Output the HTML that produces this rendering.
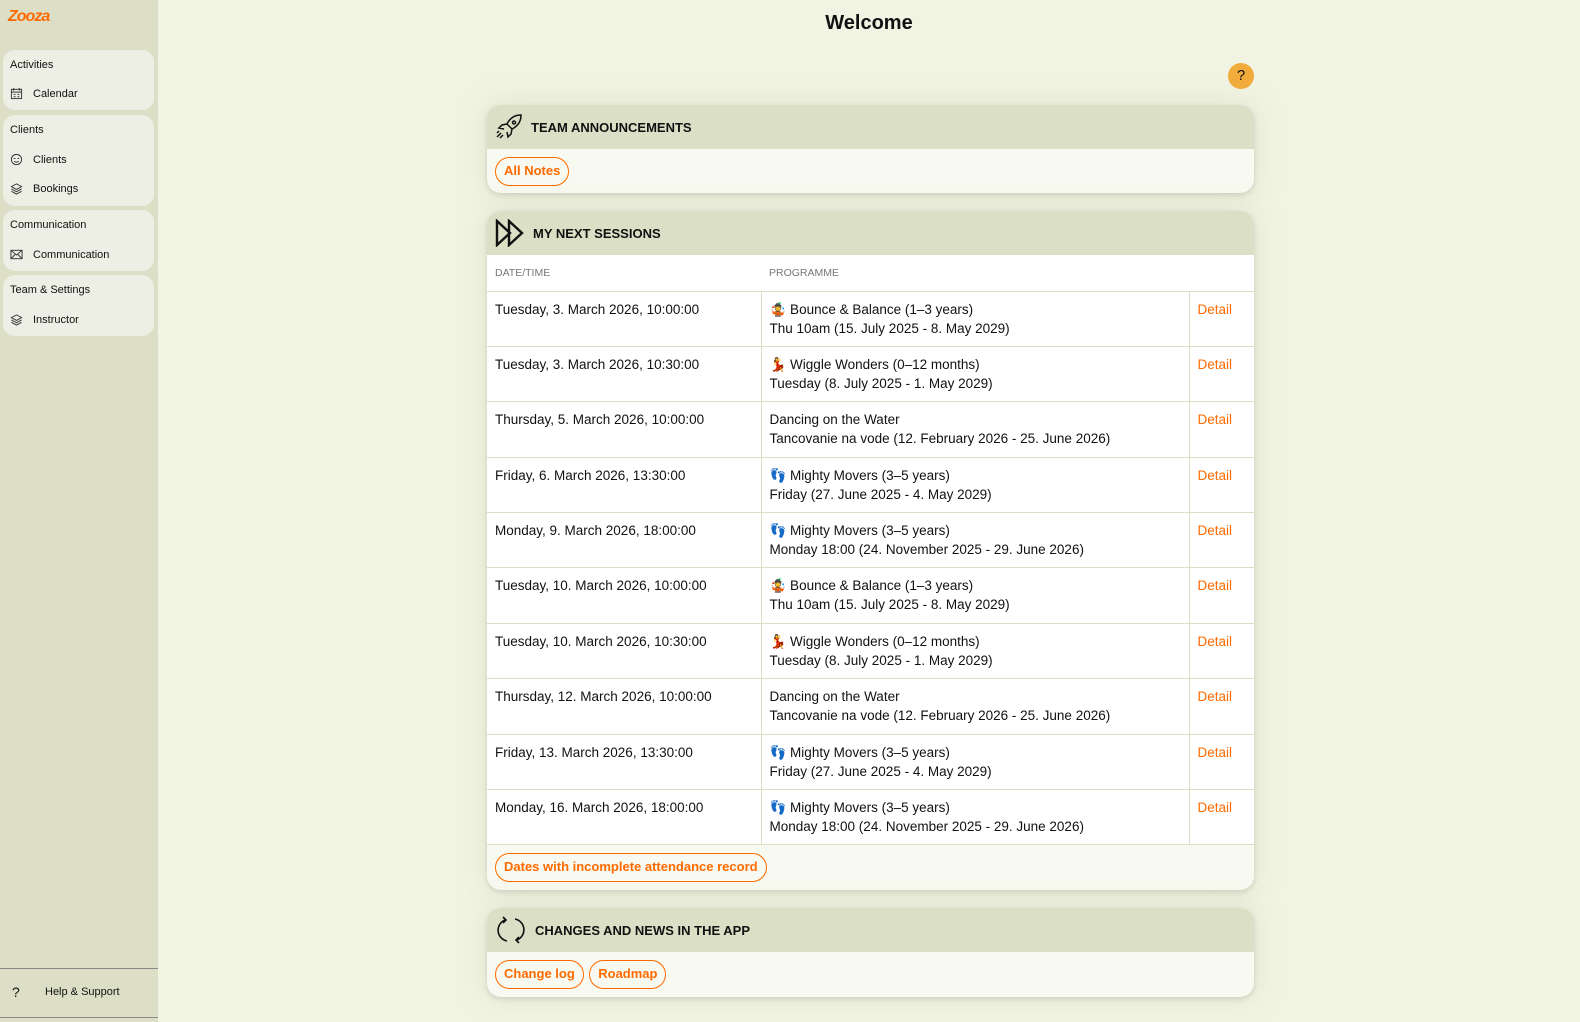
<!DOCTYPE html>
<html><head><meta charset="utf-8"><style>
*{box-sizing:border-box;margin:0;padding:0}
body{width:1580px;height:1022px;overflow:hidden;background:#f1f4e2;font-family:"Liberation Sans","Noto Sans CJK JP",sans-serif;color:#111;position:relative}
.side{position:absolute;left:0;top:0;width:158px;height:1022px;background:#dcdfc5}
.logo{position:absolute;left:8px;top:8px;color:#ff6a00;font-weight:bold;font-size:16px;font-style:italic;letter-spacing:-1px}
.grp{position:absolute;left:3px;width:151px;background:#edeee4;border-radius:12px}
.gt{position:absolute;left:7px;font-size:11px;color:#111}
.it{position:absolute;left:7px;font-size:11px;display:flex;align-items:center}
.it svg{width:13px;height:13px;margin-right:10px}
.help{position:absolute;left:0;top:968px;width:158px;height:50px;border-top:1px solid #888;border-bottom:1px solid #888;font-size:11px}
h1{position:absolute;left:158px;right:0;top:12px;text-align:center;font-size:20px;font-weight:bold}
.q{position:absolute;left:1228px;top:63px;width:26px;height:26px;border-radius:50%;background:#f2ac3c;text-align:center;line-height:26px;font-size:15px}
.card{position:absolute;left:487px;width:767px;background:#f8f9f0;border-radius:14px;box-shadow:0 2px 6px rgba(0,0,0,.12),0 0 30px rgba(180,185,150,.25);overflow:hidden}
.ch{height:44px;background:#dbdfc5;display:flex;align-items:center;padding-left:8px;font-weight:bold;font-size:13px}
.ch svg{margin-right:8px}
.btn{display:inline-block;border:1.5px solid #ff6a00;color:#ff6a00;border-radius:16px;font-weight:bold;font-size:13px;padding:0 8px;height:29px;line-height:26px;margin-right:1px}
table{border-collapse:collapse;width:767px;background:#fff;font-size:13.5px}
th{height:36px;text-align:left;font-weight:normal;color:#777;font-size:10.5px;padding-left:8px;border-bottom:1.5px solid #dcdfc5}
td{height:55.4px;vertical-align:top;padding:8px 8px 0;line-height:19px;border-bottom:1px solid #dcdfc5}
td+td{border-left:1px solid #dcdfc5}
td.d{color:#ff6a00}
</style></head><body>
<div class="side">
<div class="logo">Zooza</div>
<div class="grp" style="top:50px;height:60px"><div class="gt" style="top:9px">Activities</div>
<div class="it" style="top:37px"><svg viewBox="0 0 14 14" fill="none" stroke="#333"><rect x="1.5" y="2.5" width="11" height="10"/><path d="M1.5 5.5h11M4 1v3M10 1v3M4 8h2M8 8h2M4 10.5h2M8 10.5h2"/></svg>Calendar</div></div>
<div class="grp" style="top:115px;height:91px"><div class="gt" style="top:9px">Clients</div>
<div class="it" style="top:38px"><svg viewBox="0 0 14 14" fill="none" stroke="#333"><circle cx="7" cy="7" r="5.5"/><path d="M4 6h2M8 6h2M4.5 9c1.5 1 3.5 1 5 0"/></svg>Clients</div>
<div class="it" style="top:67px"><svg viewBox="0 0 14 14" fill="none" stroke="#333"><path d="M7 2l5.5 3L7 8 1.5 5zM1.5 7.5L7 10.5l5.5-3M1.5 10L7 13l5.5-3"/></svg>Bookings</div></div>
<div class="grp" style="top:210px;height:61px"><div class="gt" style="top:9px">Communication</div>
<div class="it" style="top:38px"><svg viewBox="0 0 14 14" fill="none" stroke="#333"><rect x="1" y="2.5" width="12" height="9"/><path d="M1 2.5l6 5 6-5M1 11.5l4.5-4.5M13 11.5L8.5 7"/></svg>Communication</div></div>
<div class="grp" style="top:275px;height:61px"><div class="gt" style="top:9px">Team &amp; Settings</div>
<div class="it" style="top:38px"><svg viewBox="0 0 14 14" fill="none" stroke="#333"><path d="M7 2l5.5 3L7 8 1.5 5zM1.5 7.5L7 10.5l5.5-3M1.5 10L7 13l5.5-3"/></svg>Instructor</div></div>
<div class="help"><span style="position:absolute;left:12px;top:15px;font-size:14px">?</span><span style="position:absolute;left:45px;top:17px">Help &amp; Support</span></div>
</div>
<h1>Welcome</h1>
<div class="q">?</div>

<div class="card" style="top:105px;height:88px">
<div class="ch"><svg width="28" height="28" viewBox="0 0 28 28" fill="none" stroke="#111" stroke-width="1.5"><path d="M26 2c-6 0-11 3-14 9l5 5c6-3 9-8 9-14zM12 11l-5 1-3 3 5 1M17 16l-1 5-3 3-1-5M19 8a1.5 1.5 0 1 0 .01 0M6 20l-4 4M8 22l-3 3M4 18l-2 2"/></svg>TEAM ANNOUNCEMENTS</div>
<div style="padding:8px 8px"><span class="btn">All Notes</span></div>
</div>

<div class="card" style="top:211px;height:679px">
<div class="ch"><svg width="30" height="28" viewBox="0 0 30 28" fill="none" stroke="#111" stroke-width="2.4"><path d="M2 2v24l13-12zM14 2v24l13-12z"/></svg>MY NEXT SESSIONS</div>
<table>
<tr><th style="width:274px">DATE/TIME</th><th style="width:428px">PROGRAMME</th><th></th></tr>
<tr><td>Tuesday, 3. March 2026, 10:00:00</td><td>🤹 Bounce &amp; Balance (1–3 years)<br>Thu 10am (15. July 2025 - 8. May 2029)</td><td class="d">Detail</td></tr>
<tr><td>Tuesday, 3. March 2026, 10:30:00</td><td>💃 Wiggle Wonders (0–12 months)<br>Tuesday (8. July 2025 - 1. May 2029)</td><td class="d">Detail</td></tr>
<tr><td>Thursday, 5. March 2026, 10:00:00</td><td>Dancing on the Water<br>Tancovanie na vode (12. February 2026 - 25. June 2026)</td><td class="d">Detail</td></tr>
<tr><td>Friday, 6. March 2026, 13:30:00</td><td>👣 Mighty Movers (3–5 years)<br>Friday (27. June 2025 - 4. May 2029)</td><td class="d">Detail</td></tr>
<tr><td>Monday, 9. March 2026, 18:00:00</td><td>👣 Mighty Movers (3–5 years)<br>Monday 18:00 (24. November 2025 - 29. June 2026)</td><td class="d">Detail</td></tr>
<tr><td>Tuesday, 10. March 2026, 10:00:00</td><td>🤹 Bounce &amp; Balance (1–3 years)<br>Thu 10am (15. July 2025 - 8. May 2029)</td><td class="d">Detail</td></tr>
<tr><td>Tuesday, 10. March 2026, 10:30:00</td><td>💃 Wiggle Wonders (0–12 months)<br>Tuesday (8. July 2025 - 1. May 2029)</td><td class="d">Detail</td></tr>
<tr><td>Thursday, 12. March 2026, 10:00:00</td><td>Dancing on the Water<br>Tancovanie na vode (12. February 2026 - 25. June 2026)</td><td class="d">Detail</td></tr>
<tr><td>Friday, 13. March 2026, 13:30:00</td><td>👣 Mighty Movers (3–5 years)<br>Friday (27. June 2025 - 4. May 2029)</td><td class="d">Detail</td></tr>
<tr><td>Monday, 16. March 2026, 18:00:00</td><td>👣 Mighty Movers (3–5 years)<br>Monday 18:00 (24. November 2025 - 29. June 2026)</td><td class="d">Detail</td></tr>
</table>
<div style="padding:8px 8px"><span class="btn">Dates with incomplete attendance record</span></div>
</div>

<div class="card" style="top:908px;height:89px">
<div class="ch"><svg width="32" height="30" viewBox="0 0 32 30" fill="none" stroke="#111" stroke-width="1.6"><path d="M10 5A11 11 0 0 0 12 26M22 25A11 11 0 0 0 20 4M8 2l3 3-3 3M24 28l-3-3 3-3"/></svg>CHANGES AND NEWS IN THE APP</div>
<div style="padding:8px 8px"><span class="btn">Change log</span> <span class="btn">Roadmap</span></div>
</div>
</body></html>
